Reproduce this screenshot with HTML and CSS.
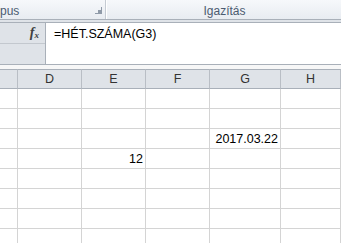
FILE: index.html
```html
<!DOCTYPE html>
<html lang="hu">
<head>
  <meta charset="UTF-8" />
  <title>HÉT.SZÁMA</title>
  <link rel="stylesheet" href="styles.css">
</head>
<body>
  <div class="ribbon">
    <div class="group group-left">
      <span class="group-label">pus</span>
      <span class="launcher"></span>
    </div>
    <div class="group group-right">
      <span class="group-label">Igazítás</span>
    </div>
  </div>
  <div class="ribbon-edge"></div>

  <div class="formula-bar">
    <div class="name-area">
      <div class="fx-button"><span class="fx">f<sub>x</sub></span></div>
      <div class="name-rest"></div>
    </div>
    <div class="formula-text">=HÉT.SZÁMA(G3)</div>
  </div>
  <div class="bar-gap"></div>

  <div class="sheet">
    <div class="col-head corner"></div>
    <div class="col-head">D</div>
    <div class="col-head">E</div>
    <div class="col-head">F</div>
    <div class="col-head">G</div>
    <div class="col-head">H</div>

    <!-- sorok -->
    <div class="row-head"></div><div class="cell"></div><div class="cell"></div><div class="cell"></div><div class="cell"></div><div class="cell"></div>
    <div class="row-head"></div><div class="cell"></div><div class="cell"></div><div class="cell"></div><div class="cell"></div><div class="cell"></div>
    <div class="row-head"></div><div class="cell"></div><div class="cell"></div><div class="cell"></div><div class="cell num">2017.03.22</div><div class="cell"></div>
    <div class="row-head"></div><div class="cell"></div><div class="cell num">12</div><div class="cell"></div><div class="cell"></div><div class="cell"></div>
    <div class="row-head"></div><div class="cell"></div><div class="cell"></div><div class="cell"></div><div class="cell"></div><div class="cell"></div>
    <div class="row-head"></div><div class="cell"></div><div class="cell"></div><div class="cell"></div><div class="cell"></div><div class="cell"></div>
    <div class="row-head"></div><div class="cell"></div><div class="cell"></div><div class="cell"></div><div class="cell"></div><div class="cell"></div>
    <div class="row-head"></div><div class="cell"></div><div class="cell"></div><div class="cell"></div><div class="cell"></div><div class="cell"></div>
  </div>
</body>
</html>
```

FILE: styles.css
```css
body {
  margin: 0;
  width: 341px;
  height: 243px;
  overflow: hidden;
  font-family: "Liberation Sans", Arial, sans-serif;
  background: #ffffff;
}

.ribbon {
  display: flex;
  height: 19px;
  background: linear-gradient(to bottom, #f6f8fb, #e8ecf1);
  border-bottom: 1px solid #a9b0b9;
}

.group {
  display: flex;
  align-items: center;
  height: 19px;
}

.group-left {
  width: 106px;
  border-right: 1px solid #c5cbd3;
  box-shadow: 1px 0 0 #ffffff;
  box-sizing: border-box;
  justify-content: space-between;
  padding-right: 3px;
}

.group-right {
  flex: 1;
  justify-content: center;
  padding-left: 2px;
}

.group-label {
  font-size: 12px;
  color: #4b5b70;
  margin-top: 2px;
}

.launcher {
  width: 6px;
  height: 6px;
  margin-top: 2px;
  border-right: 1px solid #8f9aa8;
  border-bottom: 1px solid #8f9aa8;
  position: relative;
}

.launcher::after {
  content: "";
  position: absolute;
  right: 0;
  bottom: 0;
  width: 3px;
  height: 3px;
  background: #8f9aa8;
}

.ribbon-edge {
  height: 2px;
  background: #dfe3e8;
  border-bottom: 1px solid #a9b0b9;
}

.formula-bar {
  display: flex;
  height: 41px;
  border-bottom: 1px solid #a9b0b9;
}

.name-area {
  width: 45px;
  display: flex;
  flex-direction: column;
  background: #dfe3e8;
  border-right: 1px solid #a9b0b9;
}

.fx-button {
  height: 20px;
  display: flex;
  align-items: center;
  justify-content: flex-end;
  padding-right: 6px;
  border-bottom: 1px solid #c3c8ce;
}

.fx {
  font-family: "Liberation Serif", serif;
  font-style: italic;
  font-weight: bold;
  font-size: 14px;
  color: #404040;
}

.fx sub {
  font-size: 9px;
  vertical-align: -1px;
}

.name-rest {
  flex: 1;
}

.formula-text {
  flex: 1;
  padding: 4px 0 0 8px;
  font-size: 12.5px;
  color: #000000;
}

.bar-gap {
  height: 4px;
  background: #f7f7f7;
}

.sheet {
  display: grid;
  grid-template-columns: 18px 64px 64px 64px 71px 1fr;
  grid-auto-rows: 20px;
}

.col-head {
  background: #dfe3e8;
  border-top: 1px solid #a9b0b9;
  border-bottom: 1px solid #a9b0b9;
  border-right: 1px solid #b9bec5;
  box-sizing: border-box;
  display: flex;
  align-items: center;
  justify-content: center;
  font-size: 12.5px;
  color: #333333;
}

.corner {
  background: #dfe3e8;
}

.row-head {
  border-right: 1px solid #d4d4d4;
  border-bottom: 1px solid #d4d4d4;
  box-sizing: border-box;
}

.cell {
  border-right: 1px solid #d4d4d4;
  border-bottom: 1px solid #d4d4d4;
  box-sizing: border-box;
  font-size: 12.5px;
  color: #000000;
  display: flex;
  align-items: flex-end;
  padding: 0 2px 2px 2px;
}

.num {
  justify-content: flex-end;
}
```
